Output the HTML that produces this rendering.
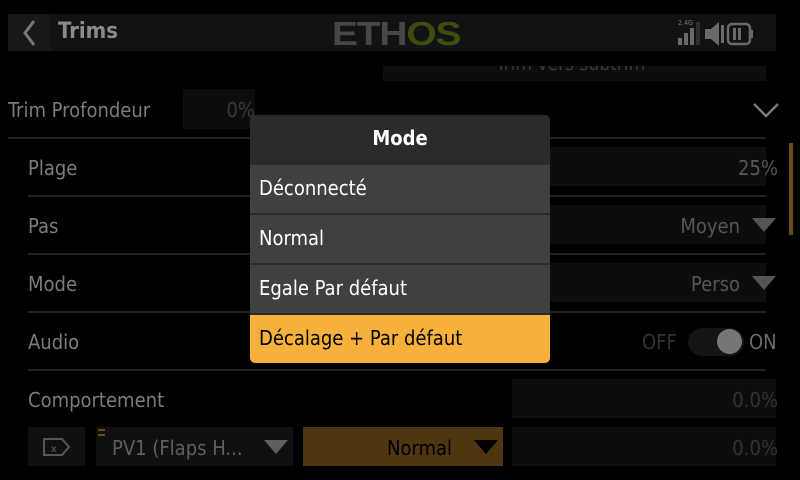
<!DOCTYPE html>
<html><head><meta charset="utf-8"><style>
*{margin:0;padding:0;box-sizing:border-box}
body{width:800px;height:480px;background:#000;font-family:"DejaVu Sans Condensed","Liberation Sans",sans-serif;position:relative;overflow:hidden;color:#7a7a7a}
.a{position:absolute}
.lbl{font-size:20px;color:#7c7c7c}
.box{background:#0d0d0d}
.line{height:2px;background:#222;left:28px;width:738px}
.val{font-size:20px;color:#555;text-align:right}
.tri{width:0;height:0;border-left:12px solid transparent;border-right:12px solid transparent;border-top:14px solid #555}
.pop{left:250px;top:115px;width:300px;height:248px;border-radius:5px;overflow:hidden;background:#2b2b2b}
.it{position:absolute;left:0;width:300px;height:48px;background:#404040;color:#fff;font-size:20px;padding-left:9px;line-height:46px}
</style></head><body>
<div class="a" style="left:8px;top:14px;width:768px;height:37px;background:#121212"></div>
<div class="a" style="left:8px;top:14px;width:42px;height:37px;background:#181818"></div>
<svg class="a" style="left:20px;top:18px" width="20" height="30"><path d="M14 3 L5 15 L14 27" stroke="#777" stroke-width="3" fill="none"/></svg>
<div class="a" style="left:58px;top:19px;font-size:22px;font-weight:bold;color:#8a8a8a">Trims</div>
<div class="a" style="left:332px;top:15px;font-size:33px;font-weight:bold;letter-spacing:-1px;font-family:'Liberation Sans',sans-serif;color:#474747;transform:scaleX(1.18);transform-origin:left">ETH<span style="color:#3b4e10">OS</span></div>
<div class="a" style="left:678px;top:19px;font-size:7px;color:#777">2.4G</div>
<div class="a" style="left:678px;top:38px;width:4px;height:7px;background:#6a6a6a"></div>
<div class="a" style="left:684px;top:33px;width:4px;height:12px;background:#6a6a6a"></div>
<div class="a" style="left:690px;top:28px;width:4px;height:17px;background:#6a6a6a"></div>
<div class="a" style="left:696px;top:22px;width:4px;height:23px;background:#2e2e2e"></div>
<svg class="a" style="left:703px;top:20px" width="70" height="28"><path d="M2 9 h6 l8-7 v24 l-8-7 h-6z" fill="#6a6a6a"/><rect x="18" y="5" width="3" height="18" fill="#6a6a6a"/><rect x="25" y="4" width="22" height="20" rx="4" fill="none" stroke="#6a6a6a" stroke-width="2.5"/><rect x="47" y="10" width="3" height="8" fill="#6a6a6a"/><rect x="30" y="8" width="3" height="12" fill="#6a6a6a"/><rect x="35" y="8" width="3" height="12" fill="#6a6a6a"/></svg>
<div class="a box" style="left:383px;top:66px;width:383px;height:15px;overflow:hidden"><div style="position:absolute;left:113px;top:-13px;font-size:19px;color:#3a3a3a;white-space:nowrap">Trim vers subtrim</div></div>
<div class="a lbl" style="left:8px;top:98px">Trim Profondeur</div>
<div class="a box" style="left:183px;top:89px;width:72px;height:40px"></div>
<div class="a val" style="left:183px;top:98px;width:72px;color:#3a3a3a">0%</div>
<svg class="a" style="left:752px;top:102px" width="28" height="16"><path d="M2 2 L14 14 L26 2" stroke="#777" stroke-width="2.5" fill="none"/></svg>
<div class="a" style="left:8px;top:137px;width:758px;height:2px;background:#222"></div>
<div class="a lbl" style="left:28px;top:156px">Plage</div>
<div class="a box" style="left:512px;top:147px;width:254px;height:39px"></div>
<div class="a val" style="left:600px;top:156px;width:178px">25%</div>
<div class="a line" style="top:195px"></div>
<div class="a lbl" style="left:28px;top:214px">Pas</div>
<div class="a box" style="left:512px;top:205px;width:254px;height:39px"></div>
<div class="a val" style="left:600px;top:214px;width:140px">Moyen</div>
<div class="a tri" style="left:752px;top:218px"></div>
<div class="a line" style="top:253px"></div>
<div class="a lbl" style="left:28px;top:272px">Mode</div>
<div class="a box" style="left:512px;top:263px;width:254px;height:39px"></div>
<div class="a val" style="left:600px;top:272px;width:140px">Perso</div>
<div class="a tri" style="left:752px;top:276px"></div>
<div class="a line" style="top:311px"></div>
<div class="a lbl" style="left:28px;top:330px">Audio</div>
<div class="a" style="left:642px;top:330px;font-size:20px;color:#333">OFF</div>
<div class="a" style="left:688px;top:328px;width:56px;height:28px;border-radius:14px;background:#151515"></div>
<div class="a" style="left:717px;top:329px;width:25px;height:25px;border-radius:50%;background:#777"></div>
<div class="a" style="left:749px;top:330px;font-size:20px;color:#6a6a6a">ON</div>
<div class="a line" style="top:369px"></div>
<div class="a lbl" style="left:28px;top:388px">Comportement</div>
<div class="a box" style="left:512px;top:379px;width:264px;height:39px"></div>
<div class="a val" style="left:600px;top:388px;width:178px;color:#333">0.0%</div>
<div class="a box" style="left:28px;top:427px;width:57px;height:39px;background:#101010"></div>
<svg class="a" style="left:42px;top:437px" width="30" height="20"><path d="M2 2 h18 l7 8 l-7 8 h-18z" fill="none" stroke="#555" stroke-width="2"/><text x="9" y="15" font-size="10" font-weight="bold" fill="#555" font-family="Liberation Sans">x</text></svg>
<div class="a box" style="left:96px;top:427px;width:197px;height:39px;background:#101010"></div>
<div class="a" style="left:98px;top:429px;width:7px;height:7px;border-top:2px solid #6a4a18;border-bottom:2px solid #6a4a18"></div>
<div class="a" style="left:112px;top:436px;font-size:20px;color:#5f5f5f">PV1 (Flaps H...</div>
<div class="a tri" style="left:264px;top:440px;border-top-color:#5f5f5f"></div>
<div class="a" style="left:303px;top:427px;width:200px;height:39px;background:#4d3610"></div>
<div class="a" style="left:387px;top:436px;font-size:20px;color:#000">Normal</div>
<div class="a tri" style="left:474px;top:440px;border-top-color:#000"></div>
<div class="a box" style="left:512px;top:427px;width:264px;height:39px"></div>
<div class="a val" style="left:600px;top:436px;width:178px;color:#333">0.0%</div>
<div class="a" style="left:789px;top:143px;width:4px;height:92px;background:#6b4a1a"></div>
<div class="a pop">
<div class="a" style="left:0;top:0;width:300px;height:49px;text-align:center;line-height:47px;color:#fff;font-weight:bold;font-size:20px">Mode</div>
<div class="it" style="top:50px">Déconnecté</div>
<div class="it" style="top:100px">Normal</div>
<div class="it" style="top:150px">Egale Par défaut</div>
<div class="it" style="top:200px;background:#f7b13a;color:#000">Décalage + Par défaut</div>
</div>
</body></html>
